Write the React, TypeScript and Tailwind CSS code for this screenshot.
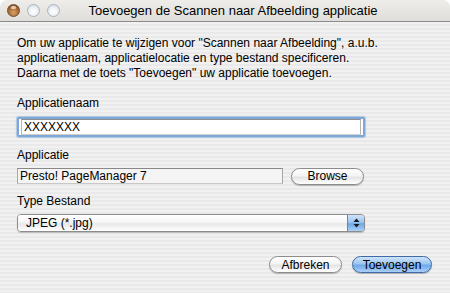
import React from "react";

const font = { fontFamily: '"Liberation Sans", Arial, sans-serif' };

function Light({ kind }: { kind: "close" | "empty" }) {
  if (kind === "close") {
    return (
      <div className="w-[13px] h-[13px] rounded-full border border-[#6b4a2e] bg-[radial-gradient(circle_at_50%_70%,#d9a060_0%,#a86a36_55%,#6e4422_100%)] relative">
        <div className="absolute left-[3px] top-[1px] w-[5px] h-[3px] rounded-full bg-[#f3e2cc] opacity-80" />
      </div>
    );
  }
  return (
    <div className="w-[13px] h-[13px] rounded-full border border-[#a9b3bf] bg-[radial-gradient(circle_at_50%_60%,#ffffff_0%,#eef1f4_50%,#c8d0da_100%)]" />
  );
}

function Capsule({ children, width, primary }: { children: React.ReactNode; width: string; primary?: boolean }) {
  return (
    <div
      className={
        "h-[17px] rounded-full border flex items-center justify-center text-[12px] text-black shadow-[0_1px_1px_rgba(0,0,0,0.25)] " +
        width +
        (primary
          ? " border-[#3f6aa3] bg-[linear-gradient(180deg,#cfe4fb_0%,#9cc6f2_45%,#6fa8e8_55%,#a9d0f8_100%)]"
          : " border-[#8c8c8c] bg-[linear-gradient(180deg,#ffffff_0%,#f4f4f4_45%,#e4e4e4_55%,#ffffff_100%)]")
      }
      style={font}
    >
      {children}
    </div>
  );
}

export default function App() {
  return (
    <div className="w-[450px] h-[293px] bg-white overflow-hidden" style={font}>
      <div className="w-[450px] h-[293px] rounded-t-[7px] overflow-hidden flex flex-col">
        <div className="h-[22px] shrink-0 flex items-center relative border-b border-[#8a8a8a] bg-[linear-gradient(180deg,#eeedea_0%,#dfdeda_100%)]">
          <div className="absolute left-[7px] top-[4px] flex gap-[7px]">
            <Light kind="close" />
            <Light kind="empty" />
            <Light kind="empty" />
          </div>
          <div className="w-full text-center text-[13px] text-black pl-[16px]">
            Toevoegen de Scannen naar Afbeelding applicatie
          </div>
        </div>
        <div className="flex-1 bg-[repeating-linear-gradient(180deg,#f1f1f1_0px,#f1f1f1_2px,#e9e9e9_2px,#e9e9e9_4px)] px-[17px] pt-[14px] text-black">
          <div className="text-[12px] leading-[15px]">
            <div>Om uw applicatie te wijzigen voor "Scannen naar Afbeelding", a.u.b.</div>
            <div>applicatienaam, applicatielocatie en type bestand specificeren.</div>
            <div>Daarna met de toets "Toevoegen" uw applicatie toevoegen.</div>
          </div>
          <div className="mt-[15px] text-[12px] leading-[15px]">Applicatienaam</div>
          <div className="mt-[6px] w-[348px] h-[20px] rounded-[2px] border-2 border-[#7fa7d6] bg-white shadow-[0_0_1px_1px_rgba(110,160,220,0.5)] flex items-center px-[2px]">
            <div className="w-full h-full border border-t-[#8d8d8d] border-x-[#b5b5b5] border-b-[#d0d0d0] flex items-center pl-[2px] text-[12px]">
              XXXXXXX
            </div>
          </div>
          <div className="mt-[11px] text-[12px] leading-[15px]">Applicatie</div>
          <div className="mt-[3px] flex items-center h-[20px]">
            <div className="w-[266px] h-[16px] border border-t-[#888] border-x-[#a8a8a8] border-b-[#c8c8c8] bg-[#f4f4f4] flex items-center pl-[2px] text-[12px]">
              Presto! PageManager 7
            </div>
            <div className="ml-[8px]">
              <Capsule width="w-[73px]">Browse</Capsule>
            </div>
          </div>
          <div className="mt-[8px] text-[12px] leading-[15px]">Type Bestand</div>
          <div className="mt-[5px] w-[348px] h-[18px] rounded-[4px] border border-[#8c8c8c] flex overflow-hidden shadow-[0_1px_1px_rgba(0,0,0,0.2)]">
            <div className="flex-1 bg-[linear-gradient(180deg,#ffffff_0%,#f6f6f6_45%,#e8e8e8_55%,#ffffff_100%)] flex items-center pl-[8px] text-[12px]">
              JPEG (*.jpg)
            </div>
            <div className="w-[17px] border-l border-[#5f86b8] bg-[linear-gradient(180deg,#cfe4fb_0%,#9cc6f2_45%,#6fa8e8_55%,#a9d0f8_100%)] flex items-center justify-center">
              <svg width="7" height="10" viewBox="0 0 7 10">
                <path d="M3.5 0.5 L6.5 4 L0.5 4 Z" fill="#1a1a1a" />
                <path d="M3.5 9.5 L6.5 6 L0.5 6 Z" fill="#1a1a1a" />
              </svg>
            </div>
          </div>
          <div className="mt-[24px] flex justify-end gap-[10px] pr-[1px]">
            <Capsule width="w-[73px]">Afbreken</Capsule>
            <Capsule width="w-[80px]" primary>Toevoegen</Capsule>
          </div>
        </div>
      </div>
    </div>
  );
}
